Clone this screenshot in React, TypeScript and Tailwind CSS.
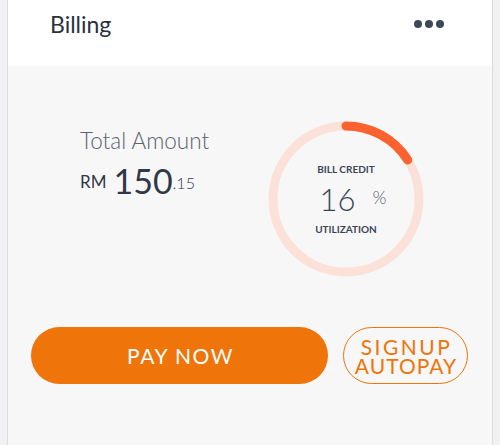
const UtilizationRing = ({ percent }: { percent: number }) => {
  const r = 73;
  const c = 2 * Math.PI * r;
  return (
    <div className="relative h-[156px] w-[156px]">
      <svg width="156" height="156" viewBox="0 0 156 156" className="-rotate-90">
        <circle cx="78" cy="78" r={r} fill="none" stroke="#fbe1d8" strokeWidth="9" />
        <circle
          cx="78"
          cy="78"
          r={r}
          fill="none"
          stroke="#fb6230"
          strokeWidth="9"
          strokeLinecap="round"
          strokeDasharray={`${(c * percent) / 100} ${c}`}
        />
      </svg>
      <div className="absolute inset-0 flex flex-col items-center justify-center text-[#3c4557]">
        <span className="text-[10px] leading-none font-bold">BILL CREDIT</span>
        <div className="mt-[10px] flex items-start pl-[14px]">
          <span className="text-[31px] leading-none font-light">16</span>
          <span className="mt-[4px] ml-[17px] text-[18px] leading-none font-light text-[#5b6272]">%</span>
        </div>
        <span className="mt-[9px] text-[10px] leading-none font-bold">UTILIZATION</span>
      </div>
    </div>
  );
};

const App = () => {
  return (
    <div className="h-[445px] w-[500px] bg-[#f1f1f3] px-[7px] font-['Lato','Noto_Sans',sans-serif]">
      <div className="flex h-full flex-col border-x border-[#dcdce0]">
        <div className="flex h-[66px] items-start justify-between bg-white pr-[48px] pl-[42px]">
          <span className="pt-[13px] text-[23px] leading-none text-[#29313f]">Billing</span>
          <div className="mt-[20px] flex gap-[3px]">
            <span className="h-[8px] w-[8px] rounded-full bg-[#3e4858]" />
            <span className="h-[8px] w-[8px] rounded-full bg-[#3e4858]" />
            <span className="h-[8px] w-[8px] rounded-full bg-[#3e4858]" />
          </div>
        </div>
        <div className="flex flex-1 flex-col bg-[#f7f7f7]">
          <div className="flex items-start pr-[68px] pl-[72px]">
            <div className="mt-[64px] flex flex-col text-[#303848]">
              <span className="text-[22.5px] leading-none font-light text-[#5b6272]">Total Amount</span>
              <div className="mt-[11px] flex items-baseline">
                <span className="relative -top-[6px] text-[17px] leading-none">RM</span>
                <span className="ml-[7px] text-[34px] leading-none">150</span>
                <span className="relative -top-[5px] text-[16px] leading-none font-light">.15</span>
              </div>
            </div>
            <div className="mt-[55px] ml-auto">
              <UtilizationRing percent={16} />
            </div>
          </div>
          <div className="mt-[50px] flex items-center gap-[15px] pl-[23px]">
            <button className="flex h-[57px] w-[297px] items-center justify-center rounded-full bg-[#ef7409] pl-[2px] text-[21px] tracking-[1.5px] text-white">
              PAY NOW
            </button>
            <button className="flex h-[57px] w-[125px] flex-col items-center justify-center rounded-full border-[1.5px] border-[#ef7409] text-[21px] leading-[19px] text-[#ef7409]">
              <span className="pl-[2px] tracking-[2.5px]">SIGNUP</span>
              <span className="pl-[1px] tracking-[1px]">AUTOPAY</span>
            </button>
          </div>
        </div>
      </div>
    </div>
  );
};

export default App;
